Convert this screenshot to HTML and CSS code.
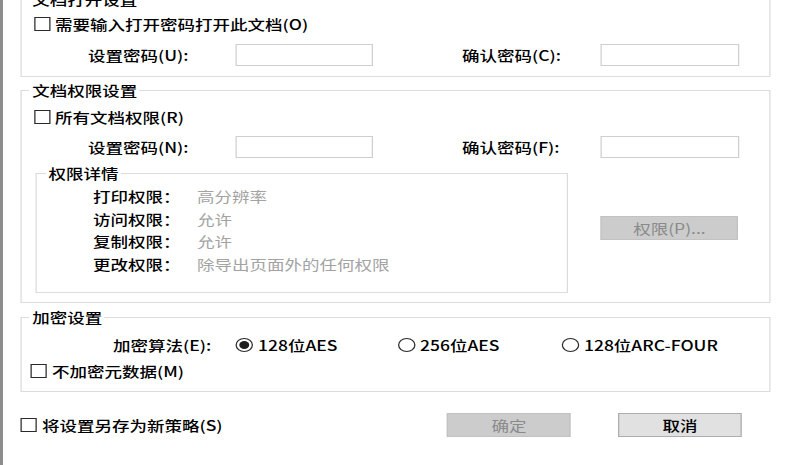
FILE: index.html
```html
<!DOCTYPE html>
<html lang="zh-CN">
<head>
<meta charset="utf-8">
<title>安全设置</title>
<link rel="stylesheet" href="styles.css">
</head>
<body>
<div class="frame">
  <div class="dialog">
    <fieldset class="group g-open">
      <legend>文档打开设置</legend>
      <div class="row row-check"><span class="box"></span><span>需要输入打开密码打开此文档(O)</span></div>
      <div class="row row-pass">
        <span class="lbl l1">设置密码(U):</span><span class="input i1"></span>
        <span class="lbl l2">确认密码(C):</span><span class="input i2"></span>
      </div>
    </fieldset>

    <fieldset class="group g-perm">
      <legend>文档权限设置</legend>
      <div class="row row-check"><span class="box"></span><span>所有文档权限(R)</span></div>
      <div class="row row-pass">
        <span class="lbl l1">设置密码(N):</span><span class="input i1"></span>
        <span class="lbl l2">确认密码(F):</span><span class="input i2"></span>
      </div>
      <div class="perm-area">
        <fieldset class="inner">
          <legend>权限详情</legend>
          <div class="plist">
            <div class="prow"><span class="pk">打印权限：</span><span class="pv">高分辨率</span></div>
            <div class="prow"><span class="pk">访问权限：</span><span class="pv">允许</span></div>
            <div class="prow"><span class="pk">复制权限：</span><span class="pv">允许</span></div>
            <div class="prow"><span class="pk">更改权限：</span><span class="pv">除导出页面外的任何权限</span></div>
          </div>
        </fieldset>
        <div class="btn btn-perm">权限(P)...</div>
      </div>
    </fieldset>

    <fieldset class="group g-enc">
      <legend>加密设置</legend>
      <div class="row row-alg">
        <span class="alg-l">加密算法(E):</span>
        <span class="opt o1"><span class="radio on"></span><span>128位AES</span></span>
        <span class="opt o2"><span class="radio"></span><span>256位AES</span></span>
        <span class="opt"><span class="radio"></span><span>128位ARC-FOUR</span></span>
      </div>
      <div class="row row-meta"><span class="box"></span><span>不加密元数据(M)</span></div>
    </fieldset>

    <div class="bottom">
      <div class="save"><span class="box"></span><span>将设置另存为新策略(S)</span></div>
      <div class="btn btn-ok">确定</div>
      <div class="btn btn-cancel">取消</div>
    </div>
  </div>
</div>
</body>
</html>
```

FILE: styles.css
```css
html, body {
  margin: 0;
  padding: 0;
  background: #ffffff;
  overflow: hidden;
}

body {
  width: 800px;
  height: 465px;
  font-family: "Noto Sans CJK SC", "Noto Sans", sans-serif;
  font-size: 14px;
  font-weight: 500;
  color: #000000;
}

.frame {
  display: flow-root;
  height: 465px;
  box-sizing: border-box;
  border-left: 3px solid #8c8c8c;
}

.dialog {
  width: 640px;
  box-sizing: border-box;
  padding-left: 14.4px;
  transform: scaleX(1.25);
  transform-origin: 0 0;
}

.group {
  width: 599.2px;
  box-sizing: border-box;
  margin: 3px 0 0 0;
  padding: 0;
  border: 1px solid #dcdcdc;
  min-inline-size: 0;
}

.group > legend {
  margin-left: 6px;
  padding: 0 2px;
  line-height: 20px;
}

.g-open {
  margin-top: -11px;
  padding-bottom: 4px;
}

.row {
  display: flex;
  align-items: center;
}

.row-check {
  height: 30px;
  padding-left: 9.4px;
}

.g-open .row-check {
  height: 29px;
}

.box {
  flex: none;
  width: 13px;
  height: 14px;
  box-sizing: border-box;
  border: 1px solid #2a2a2a;
  background: #ffffff;
  margin-right: 3.8px;
}

.row-pass {
  height: 34px;
  padding-left: 52.6px;
}

.lbl.l1 {
  width: 118.4px;
}

.lbl.l2 {
  width: 111.2px;
  margin-left: 71.2px;
}

.input {
  height: 22px;
  box-sizing: border-box;
  border: 1px solid #cfcfcf;
  background: #ffffff;
}

.input.i1 {
  width: 109.6px;
}

.input.i2 {
  width: 110.4px;
}

/* permissions group */
.g-perm {
  padding-bottom: 9px;
}

.g-perm .row-check {
  height: 34px;
}

.g-perm .row-pass {
  height: 26px;
}

.perm-area {
  display: flex;
  align-items: center;
  margin-top: 3px;
  padding-left: 11px;
}

.inner {
  width: 425.6px;
  box-sizing: border-box;
  margin: 0;
  padding: 0 0 17px 0;
  border: 1px solid #dcdcdc;
  min-inline-size: 0;
}

.inner > legend {
  margin-left: 7px;
  padding: 0 2px;
  line-height: 20px;
}

.plist {
  padding-top: 2px;
}

.prow {
  display: flex;
  align-items: center;
  height: 22.5px;
  padding-left: 44.6px;
}

.pk {
  width: 83.2px;
}

.pv {
  color: #a3a3a3;
  font-weight: 400;
}

.btn {
  height: 24px;
  box-sizing: border-box;
  display: flex;
  align-items: center;
  justify-content: center;
  border: 1px solid #c2c2c2;
  background: #cccccc;
  color: #8a8a8a;
  font-weight: 400;
}

.btn-perm {
  width: 109.6px;
  margin-left: 26.4px;
}

/* encryption group */
.g-enc {
  margin-top: 4px;
  padding-bottom: 9px;
}

.row-alg {
  height: 30px;
  margin-top: 3px;
  padding-left: 72.6px;
}

.alg-l {
  width: 98.4px;
}

.opt {
  display: flex;
  align-items: center;
}

.opt.o1 {
  width: 129.6px;
}

.opt.o2 {
  width: 131.2px;
}

.radio {
  flex: none;
  width: 14px;
  height: 14px;
  box-sizing: border-box;
  border: 1px solid #2a2a2a;
  border-radius: 50%;
  display: flex;
  align-items: center;
  justify-content: center;
  margin-right: 3.6px;
}

.radio.on::after {
  content: "";
  width: 8px;
  height: 8px;
  border-radius: 50%;
  background: #1e1e1e;
}

.row-meta {
  height: 22px;
  padding-left: 7px;
}

/* bottom bar */
.bottom {
  display: flex;
  align-items: center;
  height: 24px;
  margin-top: 21px;
}

.save {
  width: 340.8px;
  display: flex;
  align-items: center;
}

.btn-ok {
  width: 99.2px;
}

.btn-cancel {
  width: 99.2px;
  margin-left: 37.6px;
  background: #e1e1e1;
  border-color: #adadad;
  color: #000000;
  font-weight: 500;
}
```
